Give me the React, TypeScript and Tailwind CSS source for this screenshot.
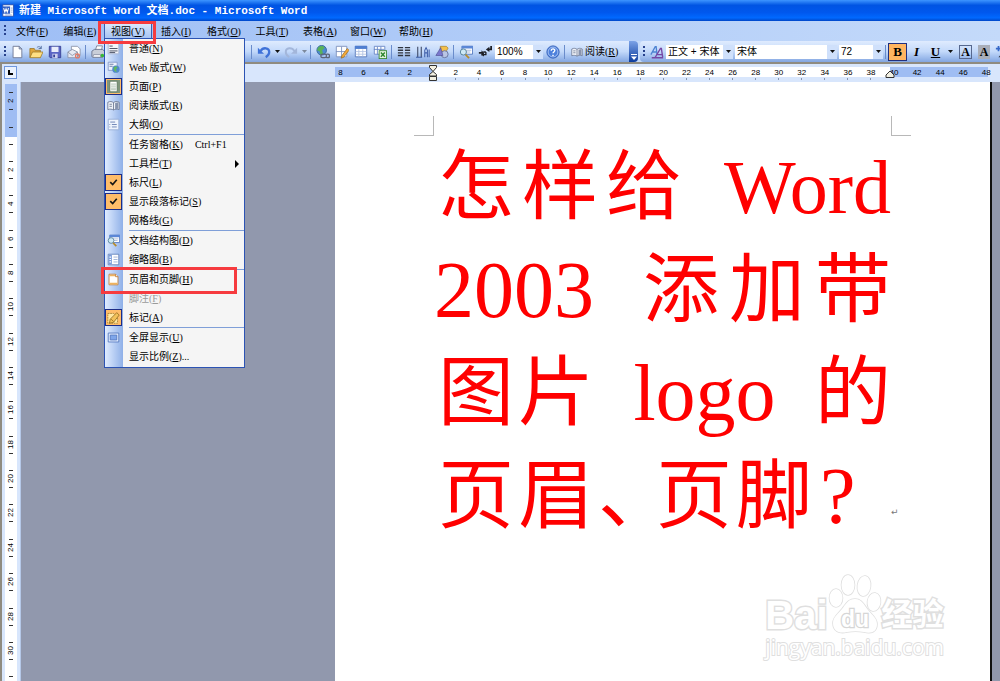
import React from "react";

type IconProps = { name: string; className?: string };

const shapes: Record<string, React.ReactNode> = {
  word: (
    <>
      <rect x="1" y="1" width="13" height="14" fill="#fff" stroke="#2b50a8" />
      <rect x="0" y="3" width="10" height="9" fill="#2f5fc4" />
      <path d="M2 5l1.5 5L5 6l1.5 4L8 5" fill="none" stroke="#fff" strokeWidth="1.3" />
      <path d="M11 5h2M11 7.5h2M11 10h2M4 13.5h8" stroke="#7c96cf" />
    </>
  ),
  new: (
    <path d="M3.5 1.5h7l3 3v10h-10zM10.5 1.5v3h3" fill="#fff" stroke="#6b7590" />
  ),
  open: (
    <>
      <path d="M1 4h5l1 2h6v8H1z" fill="#e0a63c" stroke="#94701e" strokeWidth=".8" />
      <path d="M4 8h12l-3 6.5H1z" fill="#ffdf83" stroke="#94701e" strokeWidth=".8" />
      <path d="M9 3c2-2 4-1 5 1m0-3v3h-3" fill="none" stroke="#4f6b9e" />
    </>
  ),
  save: (
    <>
      <path d="M1.5 1.5h13v13h-12l-1-1z" fill="#5b65c4" stroke="#353f94" />
      <rect x="4" y="2" width="8" height="6" fill="#e9edfb" />
      <rect x="5" y="10" width="6" height="5" fill="#cbd0ee" />
      <rect x="6" y="11" width="2" height="3" fill="#353f94" />
    </>
  ),
  mail: (
    <>
      <path d="M5 1.5h7l3 3V12H5z" fill="#fff" stroke="#8c94a8" />
      <path d="M1 8l5-3 6 3v6.5H1z" fill="#e6e9f2" stroke="#8c94a8" />
      <path d="M1 8l5 4 6-4" fill="none" stroke="#8c94a8" />
      <circle cx="12" cy="12.5" r="2.2" fill="none" stroke="#e07a68" strokeWidth="1.6" />
    </>
  ),
  print: (
    <>
      <path d="M5 6l1.5-5H13l-1 5" fill="#fff" stroke="#7b8497" />
      <path d="M1 7l3-2h9l2.5 2v5.5L13 14H2l-1-1z" fill="#c9ced8" stroke="#68718a" />
      <path d="M3 11h8v3H2z" fill="#f6f7fa" stroke="#68718a" strokeWidth=".7" />
      <circle cx="13" cy="12" r="2" fill="#35b835" />
    </>
  ),
  undo: (
    <>
      <path d="M1 3v7h7z" fill="#3f72d8" />
      <path d="M4 7c3-5 10-4 10 1 0 2-1 4-4 6" fill="none" stroke="#3f72d8" strokeWidth="2.6" />
    </>
  ),
  redo: (
    <>
      <path d="M15 3v7H8z" fill="#a3b6da" />
      <path d="M12 7C9 2 2 3 2 8c0 2 1 4 4 6" fill="none" stroke="#a3b6da" strokeWidth="2.2" />
    </>
  ),
  globe: (
    <>
      <circle cx="6.5" cy="6" r="5.5" fill="#4c89cf" stroke="#37659c" />
      <path d="M3 2c3-1.500 6-1 7 1L7 6l1 4-3 1-1-4-3-1z" fill="#59b25a" />
      <path d="M7.500 10.500H10a2 2 0 010 4H7.500a2 2 0 010-4zm4.500 0h1.500a2 2 0 010 4H12" fill="none" stroke="#5c6478" strokeWidth="1.5" />
    </>
  ),
  tableEdit: (
    <>
      <path d="M1.5 1.5h12v12h-12zM1 7.500h12M7.500 2v12" fill="#fff" stroke="#7a8fbd" />
      <path d="M14 4l2 2-6 8-3 1 1-3z" fill="#f3a93a" stroke="#8d5f12" strokeWidth=".7" />
    </>
  ),
  table: (
    <>
      <path d="M1.5 1.5h13v12h-13z" fill="#fff" stroke="#4f72b8" />
      <path d="M1 1h14v3.5H1z" fill="#4f7ed0" />
      <path d="M2 7.500h12M2 10.500h12M5.5 5v8M10 5v8" stroke="#b4c4e4" />
    </>
  ),
  excel: (
    <>
      <path d="M1.5 1.5h12v9h-12zM1 5h12M5 2v9M9 2v9" fill="#fff" stroke="#6484c4" />
      <rect x="7" y="6.5" width="8.5" height="9" fill="#e5f4df" stroke="#3b8a37" />
      <path d="M9 8.500l4.500 5m0-5L9 13.500" stroke="#2f8530" strokeWidth="1.6" />
    </>
  ),
  columns: (
    <path d="M1 3h6M1 6h6M1 9h6M1 12h6M9 3h6M9 6h6M9 9h6M9 12h6" stroke="#30343e" strokeWidth="1.7" />
  ),
  direction: (
    <>
      <path d="M2 2v12M6 2v12" stroke="#3a4560" strokeWidth="1.2" />
      <path d="M10 14V6l1.5-3L13 6v8M10 9h3M15 5v9M0 14h7" fill="none" stroke="#3d5da8" strokeWidth="1.2" />
    </>
  ),
  drawing: (
    <>
      <path d="M6 1.500h7l2 2-3 5H6z" fill="#f4c04a" stroke="#9a7427" strokeWidth=".7" />
      <circle cx="11" cy="10.500" r="4" fill="#b9c5e4" stroke="#616f9a" />
      <path d="M1 12L6.500 3 9 12z" fill="#7a78ce" stroke="#4a488f" strokeWidth=".7" />
    </>
  ),
  docMap: (
    <>
      <path d="M3.5 1.5h12v9h-12z" fill="#fff" stroke="#4c73bd" />
      <path d="M3 1h13v3H3z" fill="#5b87d6" />
      <path d="M8 6h6M8 8h5" stroke="#a7b7d8" />
      <circle cx="5" cy="8" r="3.5" fill="#cfe9f5" stroke="#4d7b93" />
      <path d="M7.5 11l4 4" stroke="#b78c29" strokeWidth="2" />
    </>
  ),
  marks: (
    <>
      <path d="M9 5l4-3v2h1V1h2v5h-3v2zM1 8h3V6l3 3-3 3v-2H1z" fill="#1d1f26" />
      <path d="M9 8H6m3 0v3H5l1.500-1.500M6.500 12.500L5 11" fill="none" stroke="#1d1f26" strokeWidth="1.5" />
    </>
  ),
  help: (
    <>
      <circle cx="8" cy="8" r="7" fill="#4d80dc" stroke="#2b59b5" />
      <circle cx="8" cy="8" r="5.6" fill="none" stroke="#c8dafa" strokeWidth=".8" />
      <path d="M6 6.5c0-3 4.5-2.5 4 0C9.7 8 8 8 8 9.5M8 11v1.5" fill="none" stroke="#fff" strokeWidth="1.6" />
    </>
  ),
  book: (
    <>
      <path d="M1 4c3-1.5 5-1 7 .5 2-1.5 4-2 7-.5v9c-3-1-5-.5-7 .5-2-1-4-1.5-7-.5z" fill="#eef1f7" stroke="#66718c" />
      <path d="M8 4.5v9M3 6.5h3M3 9h3" stroke="#66718c" />
      <path d="M10 5l4-1v8l-4 .7z" fill="#8793ad" />
    </>
  ),
  styles: (
    <>
      <path d="M1 11L6 2h1l1 9M3 8h5" fill="none" stroke="#4d83d2" strokeWidth="1.5" />
      <path d="M6 14l6-10h1l1.5 10M8.5 11H14M2 14.5h13" fill="none" stroke="#7547a5" strokeWidth="1.6" />
    </>
  ),
  normal: (
    <>
      <path d="M1.5 1.5h13v13h-13z" fill="#f4f6fb" stroke="#a5b2ce" />
      <path d="M3 5h4M3 8h10M3 11h10M3 13h7" stroke="#4e5468" strokeWidth="1.2" />
    </>
  ),
  web: (
    <>
      <path d="M1.5 1.5h11v10h-11z" fill="#eef3fd" stroke="#7b93c5" />
      <path d="M3 4h5M3 6.5h4" stroke="#526a9b" />
      <circle cx="11" cy="10" r="4.5" fill="#4f89cc" />
      <path d="M8 8l3-2 2 2-2 2 1 4-3-2z" fill="#62b961" />
    </>
  ),
  page: (
    <>
      <path d="M0 0h16v16H0z" fill="#7f957c" />
      <path d="M3.5 1.5h9v13h-9z" fill="#fff" stroke="#59745b" />
      <path d="M5 5h6M5 7.5h6M5 10h6M5 12h6" stroke="#9db2a0" />
    </>
  ),
  outline: (
    <>
      <path d="M1.5 1.5h13v13h-13z" fill="#eff4fd" stroke="#93a9d3" />
      <path d="M4 5h6M6 8h6M6 11h6M3 8h1M3 11h1" stroke="#7188b8" strokeWidth="1.2" />
    </>
  ),
  check: <path d="M4 7.5l3 3 5-6" fill="none" stroke="#151515" strokeWidth="2" />,
  thumbs: (
    <>
      <path d="M1.5 1.5h13v13h-13z" fill="#fff" stroke="#5577b4" />
      <path d="M2 2h4v12H2z" fill="#7a9cda" />
      <path d="M3 5h2M3 8h2M3 11h2" stroke="#fff" strokeWidth="1.5" />
      <path d="M8 5h5M8 8h5M8 11h5" stroke="#92a9d1" />
    </>
  ),
  header: (
    <>
      <path d="M2.5 1.5h8l3 3v10h-11z" fill="#fff" stroke="#bd7429" />
      <path d="M3 2h7v2H3zM3 12h10v2H3z" fill="#efb35e" />
      <path d="M10.5 1.5v3h3" fill="#fff" stroke="#bd7429" />
    </>
  ),
  markup: (
    <>
      <path d="M1 3h7l5 4v8H1z" fill="#ffe7a1" stroke="#9c792d" strokeDasharray="2 1" />
      <path d="M12 2l3 3-7 9-5 1 1-5z" fill="#f2c25b" stroke="#936b1f" />
      <path d="M5 10l3 3" stroke="#936b1f" />
    </>
  ),
  full: (
    <>
      <path d="M1.5 2.5h13v11h-13z" fill="#dce8fc" stroke="#4f74bc" />
      <path d="M4 5h8v6H4z" fill="#7ea6ea" stroke="#4f74bc" />
    </>
  ),
  spark: (
    <>
      <path d="M4 1v6M1 4h6" stroke="#3568c8" strokeWidth="2" />
      <path d="M4 14l9-11 2 2-7 9z" fill="#252a36" />
    </>
  ),
};

function Icon({ name, className = "size-3.5" }: IconProps) {
  return (
    <svg viewBox="0 0 16 16" className={className + " shrink-0"} aria-hidden="true">
      {shapes[name]}
    </svg>
  );
}

function Arrow() {
  return (
    <svg viewBox="0 0 5 3" className="h-[3px] w-[5px] shrink-0" aria-hidden="true">
      <path d="M0 0h5L2.5 3z" fill="#111" />
    </svg>
  );
}

function Tool({ name }: { name: string }) {
  return (
    <button type="button" aria-label={name} className="flex h-5 w-[19px] shrink-0 items-center justify-center">
      <Icon name={name} />
    </button>
  );
}

function Divider() {
  return <span className="mx-0.5 h-3.5 w-px shrink-0 bg-[#6a8ccb]" />;
}

function Grip() {
  return <span className="h-3 w-0.5 shrink-0 bg-[repeating-linear-gradient(#27418c_0_2px,transparent_2px_4px)]" />;
}

function Combo({ label, value, className }: { label: string; value: string; className: string }) {
  return (
    <div className={"relative h-3.5 shrink-0 bg-white " + className}>
      <select
        aria-label={label}
        defaultValue={value}
        className="block h-3.5 w-full appearance-none overflow-hidden bg-transparent pr-3 pl-0.5 font-['Liberation_Sans','Noto_Sans_CJK_SC',sans-serif] text-[10px] leading-[14px] whitespace-nowrap outline-none"
      >
        <option>{value}</option>
      </select>
      <span className="pointer-events-none absolute inset-y-0 right-0 flex w-2.5 items-center justify-center bg-[#cfe0fb]">
        <Arrow />
      </span>
    </div>
  );
}

function Key({ k }: { k: string }) {
  return (
    <span>
      (<u>{k}</u>)
    </span>
  );
}

const menus = [
  ["文件", "F"],
  ["编辑", "E"],
  ["视图", "V"],
  ["插入", "I"],
  ["格式", "O"],
  ["工具", "T"],
  ["表格", "A"],
  ["窗口", "W"],
  ["帮助", "H"],
];

type Item = {
  text: string;
  k: string;
  icon?: string;
  on?: boolean;
  off?: boolean;
  shortcut?: string;
  sub?: boolean;
  after?: string;
};

const groups: Item[][] = [
  [
    { text: "普通", k: "N", icon: "normal" },
    { text: "Web 版式", k: "W", icon: "web" },
    { text: "页面", k: "P", icon: "page", on: true },
    { text: "阅读版式", k: "R", icon: "book" },
    { text: "大纲", k: "O", icon: "outline" },
  ],
  [
    { text: "任务窗格", k: "K", shortcut: "Ctrl+F1" },
    { text: "工具栏", k: "T", sub: true },
    { text: "标尺", k: "L", icon: "check", on: true },
    { text: "显示段落标记", k: "S", icon: "check", on: true },
    { text: "网格线", k: "G" },
  ],
  [
    { text: "文档结构图", k: "D", icon: "docMap" },
    { text: "缩略图", k: "B", icon: "thumbs" },
  ],
  [
    { text: "页眉和页脚", k: "H", icon: "header" },
    { text: "脚注", k: "F", off: true },
    { text: "标记", k: "A", icon: "markup", on: true },
  ],
  [
    { text: "全屏显示", k: "U", icon: "full" },
    { text: "显示比例", k: "Z", after: "..." },
  ],
];

function ViewMenu() {
  return (
    <div className="absolute top-full left-0 z-20 w-[141px] border border-[#2c53b3] bg-[linear-gradient(90deg,#e0ecff_0,#8fb0e8_18px,#f5f5f5_18px)] pb-px">
      {groups.map((group, i) => (
        <div key={i}>
          {i > 0 && <div className="ml-6 h-px bg-[#7f9fd8]" />}
          {group.map((item) => (
            <button
              key={item.text}
              type="button"
              disabled={item.off}
              className={
                "flex h-[19px] w-full items-center text-left whitespace-pre " +
                (item.off ? "text-[#9a9a9a]" : "text-black")
              }
            >
              <span
                className={
                  "flex h-[17px] w-[17px] items-center justify-center border " +
                  (item.on ? "border-[#1d2c86] bg-[#ffbd69]" : "border-transparent")
                }
              >
                {item.icon && <Icon name={item.icon} className="size-[13px]" />}
              </span>
              <span className="ml-[7px]">
                {item.text}
                <Key k={item.k} />
                {item.after}
              </span>
              {item.shortcut && <span className="ml-3">{item.shortcut}</span>}
              {item.sub && (
                <svg viewBox="0 0 4 8" className="mr-[5px] ml-auto h-2 w-1" aria-hidden="true">
                  <path d="M0 0l4 4-4 4z" fill="#000" />
                </svg>
              )}
            </button>
          ))}
        </div>
      ))}
      <div className="pointer-events-none absolute top-[228px] -left-1 h-[27px] w-[136px] border-3 border-[#f63b3f]" />
    </div>
  );
}

function MenuBar() {
  return (
    <nav className="flex h-5 items-center bg-linear-to-r from-[#9ebef5] to-[#c4dafa] pl-1">
      <Grip />
      <ul className="flex h-full">
        {menus.map(([text, k]) => (
          <li key={k} className="relative h-[17px] w-12 first:ml-0.5">
            <button
              type="button"
              className={
                "mt-px h-[19px] w-full whitespace-nowrap " +
                (k === "V" ? "border border-b-0 border-[#3a5fb5] bg-linear-to-b from-[#dce9fd] to-[#9dbcf0]" : "")
              }
            >
              {text}
              <Key k={k} />
            </button>
            {k === "V" && (
              <>
                <ViewMenu />
                <div className="pointer-events-none absolute top-0 -left-1.5 z-30 h-[23px] w-[58px] border-3 border-[#f63b3f]" />
              </>
            )}
          </li>
        ))}
      </ul>
    </nav>
  );
}

function Toolbars() {
  return (
    <div className="flex h-[21px] bg-[#c4dafa]">
      <div className="flex w-[629px] shrink-0 items-center bg-linear-to-b from-[#dfebfe] via-[#c3d9fa] to-[#83a6e1] pl-1">
        <Grip />
        <div className="ml-px flex w-[242px] shrink-0 items-center overflow-hidden">
          <Tool name="new" />
          <Tool name="open" />
          <Tool name="save" />
          <Tool name="mail" />
          <Divider />
          <Tool name="print" />
          <Tool name="docMap" />
          <Divider />
        </div>
        <Divider />
        <Tool name="undo" />
        <span className="flex w-2 justify-center">
          <Arrow />
        </span>
        <Tool name="redo" />
        <span className="flex w-2 justify-center opacity-40">
          <Arrow />
        </span>
        <Divider />
        <Tool name="globe" />
        <Tool name="tableEdit" />
        <Tool name="table" />
        <Tool name="excel" />
        <Divider />
        <Tool name="columns" />
        <Tool name="direction" />
        <Tool name="drawing" />
        <Divider />
        <Tool name="docMap" />
        <Tool name="marks" />
        <Combo label="显示比例" value="100%" className="ml-px w-12" />
        <Tool name="help" />
        <Divider />
        <button type="button" className="ml-1 flex items-center gap-0.5 whitespace-nowrap">
          <Icon name="book" className="size-3" />
          <span>
            阅读
            <Key k="R" />
          </span>
        </button>
      </div>
      <button
        type="button"
        aria-label="工具栏选项"
        className="flex w-[9px] shrink-0 items-end justify-center rounded-r-sm bg-linear-to-b from-[#7ba2e7] to-[#0b3b9c] pb-0.5"
      >
        <svg viewBox="0 0 6 6" className="size-1.5" aria-hidden="true">
          <path d="M0 0h6v1H0zM0 2.5h6L3 6z" fill="#fff" />
        </svg>
      </button>
      <div className="ml-0.5 flex flex-1 items-center overflow-hidden rounded-l-sm bg-linear-to-b from-[#dfebfe] via-[#c3d9fa] to-[#83a6e1] pl-[3px]">
        <Grip />
        <span className="ml-0.5">
          <Tool name="styles" />
        </span>
        <div className="flex gap-0.5">
          <Combo label="样式" value="正文 + 宋体" className="w-[67px]" />
          <Combo label="字体" value="宋体" className="w-[102px]" />
          <Combo label="字号" value="72" className="w-11" />
        </div>
        <Divider />
        <div className="flex shrink-0 items-center font-['Liberation_Serif'] text-[13px] leading-4 font-bold">
          <button type="button" className="h-[18px] w-[19px] border border-[#20307f] bg-[#ffb560]">
            B
          </button>
          <button type="button" className="w-[19px] italic">
            I
          </button>
          <button type="button" className="w-[19px] underline">
            U
          </button>
          <span className="flex w-2.5 justify-center">
            <Arrow />
          </span>
          <button type="button" className="ml-1 h-3.5 w-[13px] border border-[#56688f] text-xs leading-3">
            A
          </button>
          <button type="button" className="ml-1.5 h-3.5 w-3 bg-[#a9aeb9] text-xs leading-[14px]">
            A
          </button>
        </div>
        <span className="ml-0.5">
          <Tool name="spark" />
        </span>
      </div>
    </div>
  );
}

// -8 .. 48 in steps of two characters
const columns = Array.from({ length: 29 }, (_, i) => i * 2 - 8);
// upper margin, then the text area
const rows = Array.from({ length: 17 }, (_, i) => i * 2 - 2);

function TopRuler() {
  return (
    <div className="flex h-[18px] bg-[#d8e6fc]">
      <div className="w-[327px] shrink-0 pt-0.5 pl-0.5">
        <button
          type="button"
          aria-label="制表符"
          className="flex size-[13px] items-center justify-center border border-[#6f97dc] bg-[#eaf2fe]"
        >
          <span className="size-[5px] border-b-2 border-l-2 border-black" />
        </button>
      </div>
      <div className="relative mr-0.5 flex-1 pt-[3px]">
        <div className="flex h-2.5 bg-[linear-gradient(90deg,transparent_6px,#9fbdf3_6px_103px,#fff_103px_561px,#9fbdf3_561px_659px,transparent_659px)] font-['Liberation_Sans'] text-[8px] leading-[11px] text-black">
          {columns.map((n) => (
            <span key={n} className="flex-1 text-center">
              {n === 0 ? "" : Math.abs(n)}
            </span>
          ))}
        </div>
        <div className="mt-px flex h-0.5">
          {columns.map((n) => (
            <span key={n} className="flex flex-1 justify-center">
              {n > 0 && n < 40 && <span className="w-px bg-[#8794ae]" />}
            </span>
          ))}
        </div>
        <svg viewBox="0 0 10 18" className="absolute top-0 left-[99px] h-[18px] w-2.5" aria-hidden="true">
          <path d="M1.5 1.5h7v2L5 7.5l-3.5-4zM5 7.5l3.5 3V12h-7v-1.5zM1.5 12.5h7v4h-7z" fill="#f3f0e2" stroke="#333" />
        </svg>
        <svg viewBox="0 0 10 8" className="absolute top-[6px] left-[556px] h-2 w-2.5" aria-hidden="true">
          <path d="M1 7.5V5l4-4 4 4v2.5z" fill="#f3f0e2" stroke="#333" />
        </svg>
      </div>
    </div>
  );
}

function SideRuler() {
  return (
    <div className="w-[19px] shrink-0 overflow-hidden border-r border-[#b5c8e8] bg-[#d8e6fc] pt-0.5 pl-[3px]">
      <div className="flex h-[620px] w-3 flex-col bg-[linear-gradient(#9fbdf3_53px,#fff_53px)] font-['Liberation_Sans'] text-[8px] leading-[12px] text-black">
        <div className="flex h-[584px] shrink-0 flex-col">
          {rows.map((n) => (
            <div key={n} className="flex flex-1 flex-col items-center justify-center gap-px">
              <span className="h-px w-1 bg-[#333]" />
              <span className="flex h-3.5 rotate-180 items-center justify-center [writing-mode:vertical-rl]">
                {n === 0 ? "" : Math.abs(n)}
              </span>
              <span className="h-px w-1 bg-[#333]" />
            </div>
          ))}
        </div>
        <span className="mt-2 h-px w-1 self-center bg-[#333]" />
      </div>
    </div>
  );
}

function Watermark() {
  return (
    <div className="absolute right-[46px] bottom-[22px] flex flex-col text-white [paint-order:stroke] [-webkit-text-stroke:3px_#dfdfdf]">
      <div className="flex items-end">
        <span className="font-['Liberation_Sans'] text-[40px] leading-10 font-bold">Bai</span>
        <svg viewBox="0 0 54 62" className="h-[62px] w-[54px]" aria-hidden="true">
          <g fill="#fff" stroke="#dfdfdf" strokeWidth="1.6">
            <ellipse cx="8" cy="25" rx="6.5" ry="9" />
            <ellipse cx="20" cy="12" rx="6.5" ry="10" />
            <ellipse cx="36" cy="13" rx="6.500" ry="10" transform="rotate(8 36 13)" />
            <ellipse cx="46" cy="29" rx="6.5" ry="9" transform="rotate(8 46 29)" />
            <path d="M27 26c7 0 9 6 13 11s9 8 9 14c0 8-6 10-13 8-6-1-11-1-17 0-8 2-14-1-14-9 0-6 5-9 9-14s6-10 13-10z" />
          </g>
          <text x="27" y="54" textAnchor="middle" fontFamily="Liberation Sans" fontSize="23" fontWeight="bold" fill="#fff" stroke="#d6d6d6" strokeWidth="2.5">
            du
          </text>
        </svg>
        <span className="text-[31px] leading-10 font-bold">经验</span>
      </div>
      <span className="font-['Open_Sans'] text-[21px] leading-6 [-webkit-text-stroke:2px_#dfdfdf]">jingyan.baidu.com</span>
    </div>
  );
}

function Page() {
  return (
    <main className="relative min-w-0 flex-1 border-r-2 border-[#111] bg-white px-[79px] pt-[34px]">
      <div className="flex justify-between">
        <span className="size-5 border-r border-b border-[#b8b8b8]" />
        <span className="size-5 border-b border-l border-[#b8b8b8]" />
      </div>
      <h1 className="px-5 font-['Liberation_Serif','Noto_Sans_CJK_SC',serif] text-[76px] leading-[103px] whitespace-nowrap text-[#f00]">
        <span className="flex h-[103px] justify-between pl-1">
          <span className="flex gap-2">
            <span>怎</span>
            <span>样</span>
            <span>给</span>
          </span>
          <span>Word</span>
        </span>
        <span className="flex h-[103px] justify-between">
          <span className="text-[80px]">2003</span>
          <span className="flex gap-2.5">
            <span>添</span>
            <span>加</span>
            <span>带</span>
          </span>
        </span>
        <span className="flex h-[103px] justify-between pl-1">
          <span className="flex gap-1">
            <span>图</span>
            <span>片</span>
          </span>
          <span className="text-[80px]">logo</span>
          <span>的</span>
        </span>
        <span className="flex h-[103px] gap-1 pl-1">
          <span>页</span>
          <span>眉</span>
          <span className="mr-4 [font-feature-settings:'halt']">、</span>
          <span>页</span>
          <span>脚</span>
          <span className="ml-1 text-[80px]">?</span>
          <span className="mt-4 ml-auto w-0 font-['DejaVu_Sans'] text-[9px] text-[#777]">↵</span>
        </span>
      </h1>
      <Watermark />
    </main>
  );
}

export default function App() {
  return (
    <div className="flex h-screen flex-col overflow-hidden bg-[#9198ad] font-['Liberation_Serif','Noto_Sans_CJK_SC',serif] text-[10px] leading-4 text-black">
      <header className="flex h-[21px] shrink-0 items-center gap-1 bg-[linear-gradient(#3d95ff,#0054e3_25%,#0058ee_60%,#0069ff_85%,#0046c8)] pl-0.5 text-white">
        <Icon name="word" className="size-[13px]" />
        <h1 className="font-['Liberation_Mono','Noto_Sans_CJK_SC',monospace] text-[11px] leading-5 font-bold whitespace-nowrap">
          新建 Microsoft Word 文档.doc - Microsoft Word
        </h1>
      </header>
      <MenuBar />
      <Toolbars />
      <div className="flex min-h-0 flex-1 flex-col border-t-2 border-l-2 border-[#8f8b80]">
        <TopRuler />
        <div className="flex min-h-0 flex-1">
          <SideRuler />
          <div className="w-[314px] shrink-0" />
          <Page />
          <div className="w-2 shrink-0" />
        </div>
      </div>
    </div>
  );
}
